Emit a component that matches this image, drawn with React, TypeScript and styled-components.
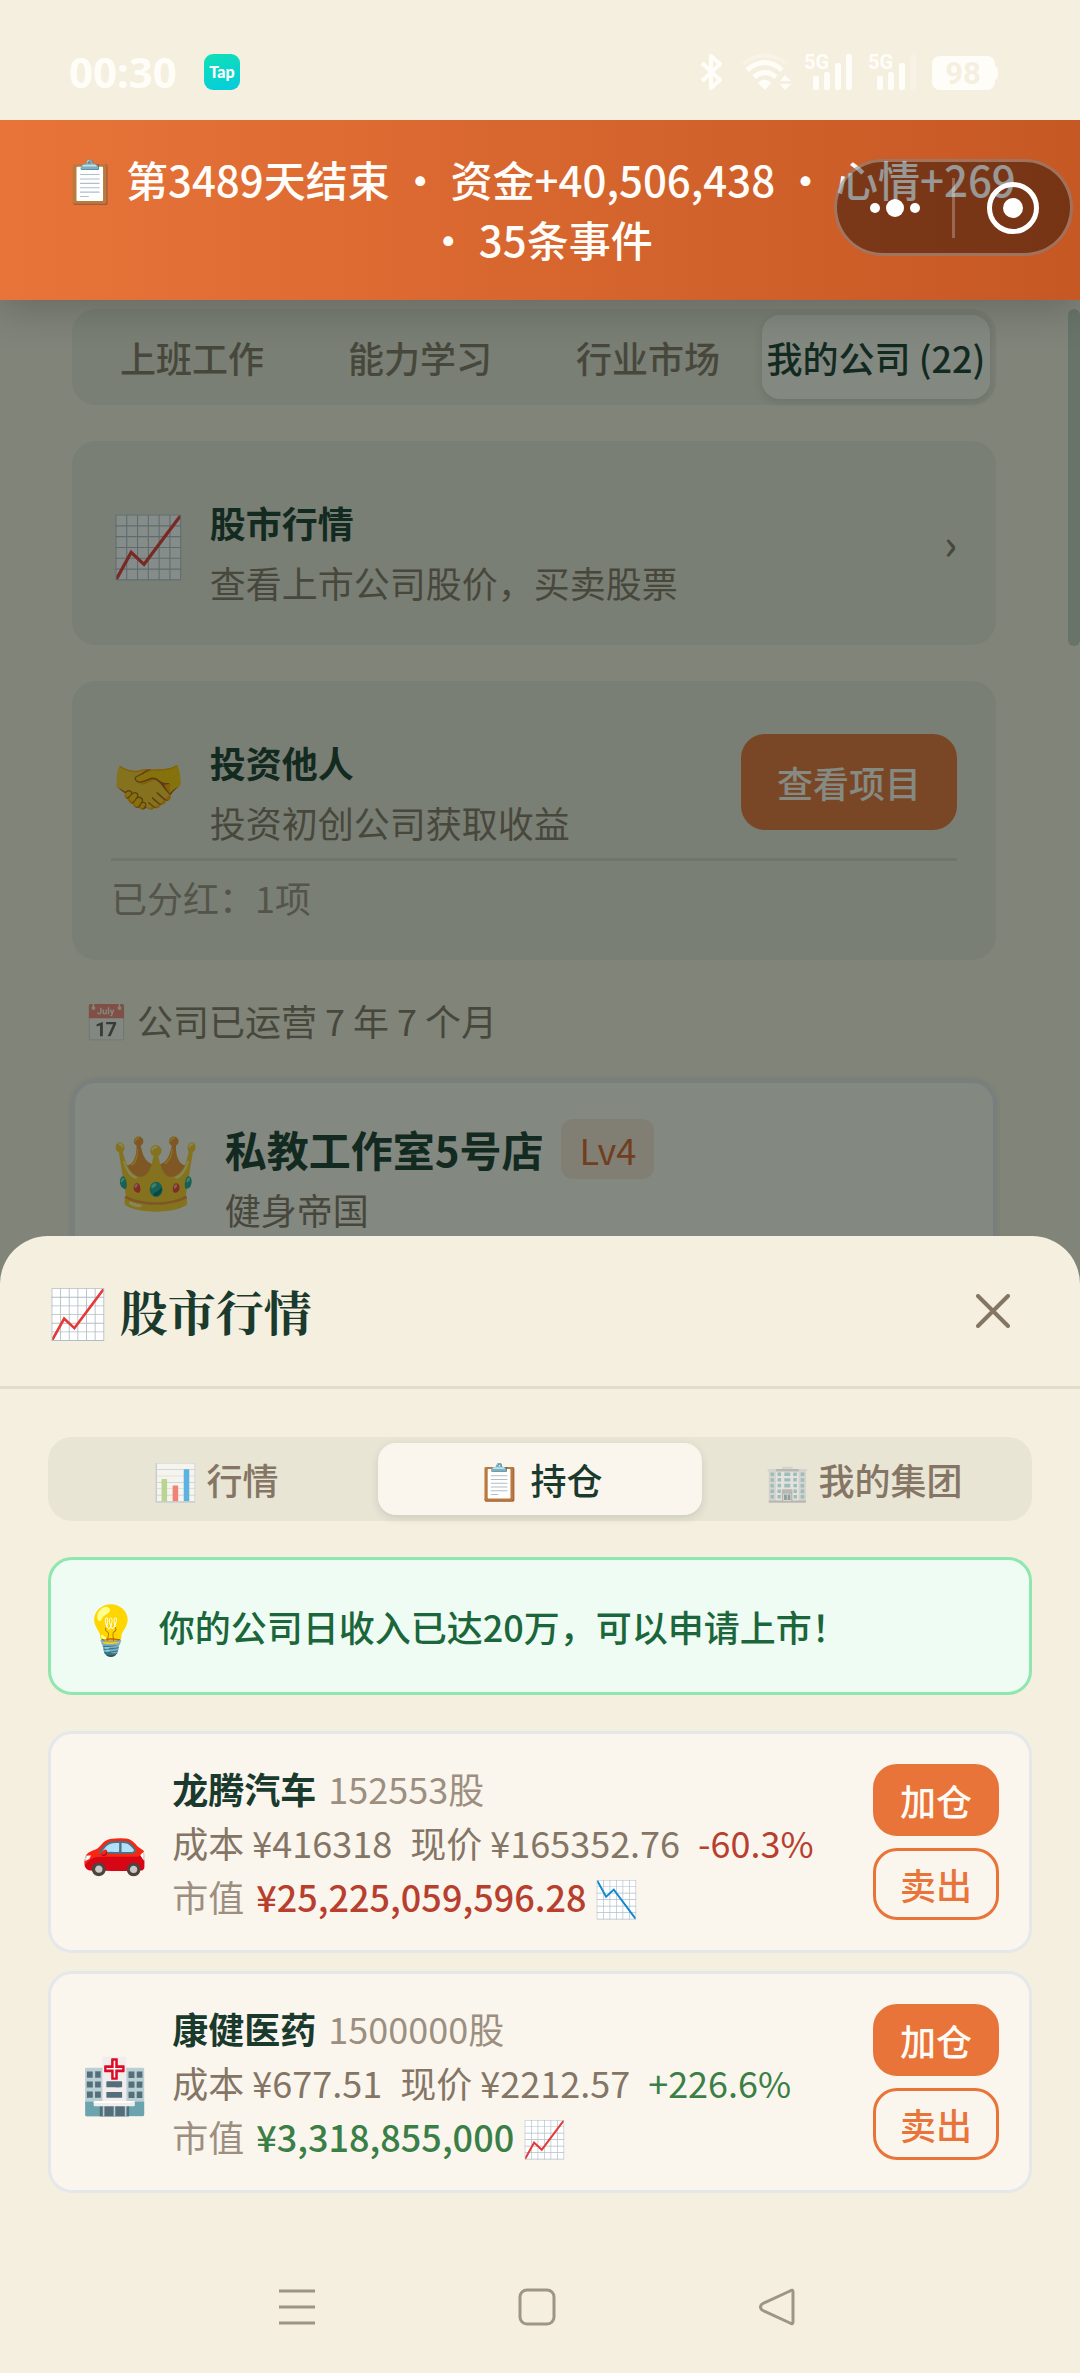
import React from "react";
import styled, { createGlobalStyle, css } from "styled-components";

const c = {
  cream: "#f5efdf",
  paper: "#faf6ee",
  ink: "#1a3a2e",
  brown: "#857565",
  muted: "#9c8f80",
  orange: "#e87439",
  red: "#b83f2e",
  green: "#3a7f45",
  tint: "rgba(26, 58, 46, 0.05)",
  cardTint: "rgba(20, 74, 60, 0.06)",
};

const sans = `"Noto Sans CJK SC", "Noto Color Emoji", sans-serif`;
const serif = `"Noto Serif CJK SC", "Noto Serif SC", "Noto Sans CJK SC", "Noto Color Emoji", serif`;

const GlobalStyle = createGlobalStyle`
  *, *::before, *::after { box-sizing: border-box; }
  body { margin: 0; background: ${c.cream}; }
  button { font: inherit; border: 0; padding: 0; background: none; cursor: pointer; }
  h2, h3, p { margin: 0; font-size: inherit; font-weight: inherit; }
`;

const Screen = styled.div`
  display: flex;
  flex-direction: column;
  height: 100vh;
  overflow: hidden;
  background: ${c.cream};
  color: ${c.ink};
  font-family: ${sans};
  font-size: 36px;
  line-height: 54px;
`;

/* ---------- system bars ---------- */

const StatusBar = styled.header`
  position: relative;
  z-index: 3;
  display: flex;
  align-items: center;
  flex: none;
  height: 120px;
  padding: 24px 80px 0 69px;
  background: ${c.cream};
  color: #fffdf8;
`;

const Clock = styled.time`
  font-family: "Noto Sans", "Open Sans", sans-serif;
  font-size: 42px;
  font-weight: 700;
`;

const TapBadge = styled.span`
  display: grid;
  place-items: center;
  width: 36px;
  height: 36px;
  margin-left: 27px;
  border-radius: 9px;
  background: linear-gradient(160deg, #10e0b4, #04cbe0);
  color: #fff;
  font: 900 16px/36px Lato, sans-serif;
`;

const StatusIcons = styled.svg`
  width: 302px;
  height: 44px;
  margin-left: auto;
  fill: currentColor;
`;

const NavBar = styled.nav`
  display: flex;
  justify-content: center;
  align-items: center;
  gap: 168px;
  flex: none;
  height: 132px;
  padding-right: 6px;
`;

const NavButton = styled.button`
  display: grid;
  place-items: center;
  width: 72px;
  height: 72px;
  svg {
    width: 38px;
    height: 38px;
    fill: none;
    stroke: #9d9688;
    stroke-width: 3;
  }
`;

/* ---------- banner ---------- */

const Banner = styled.div`
  position: relative;
  z-index: 2;
  flex: none;
  padding: 29px 60px 31px;
  background: linear-gradient(90deg, ${c.orange}, #c65824);
  box-shadow: 0 12px 36px rgba(0, 0, 0, 0.18);
  color: #fffdf9;
  font-size: 42px;
  font-weight: 500;
  line-height: 60px;
  text-align: center;
`;

const Capsule = styled.div`
  position: absolute;
  top: 39px;
  right: 7px;
  display: flex;
  align-items: center;
  width: 239px;
  height: 97px;
  border: 3px solid rgba(255, 255, 255, 0.3);
  border-radius: 49px;
  background: rgba(0, 0, 0, 0.4);
`;

const CapsuleButton = styled.button`
  display: grid;
  place-items: center;
  flex: 1;
  height: 100%;
  color: #fff;
  svg {
    width: 56px;
    height: 56px;
    fill: currentColor;
  }
`;

const CapsuleRule = styled.i`
  width: 3px;
  height: 60px;
  background: rgba(255, 255, 255, 0.25);
`;

/* ---------- page behind the sheet ---------- */

const Stage = styled.div`
  position: relative;
  flex: 1;
  min-height: 0;
  overflow: hidden;
`;

const Page = styled.main`
  display: flex;
  flex-direction: column;
  gap: 36px;
  padding: 9px 84px 0 72px;
`;

const ScrollThumb = styled.i`
  position: absolute;
  top: 9px;
  right: 0;
  width: 12px;
  height: 337px;
  border-radius: 6px;
  background: #c4cfc0;
`;

const TabList = styled.div<{ $cols: number }>`
  display: grid;
  grid-template-columns: repeat(${(p) => p.$cols}, 1fr);
  padding: 6px;
  border-radius: 24px;
  background: ${(p) => (p.$cols === 4 ? c.cardTint : c.tint)};
`;

const Tab = styled.button<{ $active?: boolean; $tall?: boolean }>`
  height: ${(p) => (p.$tall ? 84 : 72)}px;
  border-radius: 18px;
  color: ${c.brown};
  font-weight: 500;
  white-space: nowrap;
  ${(p) =>
    p.$active &&
    css`
      background: ${c.paper};
      box-shadow: 0 3px 9px rgba(26, 58, 46, 0.14);
      color: ${c.ink};
    `}
`;

const Faded = styled.span<{ $on?: boolean }>`
  opacity: ${(p) => (p.$on ? 0.6 : 1)};
`;

const Card = styled.section`
  padding: 31px 39px 33px;
  border-radius: 24px;
  background: ${c.cardTint};
`;

const Row = styled.div`
  display: flex;
  align-items: center;
  gap: 24px;
`;

const Emoji = styled.span<{ $size: number }>`
  flex: none;
  font-size: ${(p) => p.$size}px;
  line-height: 84px;
`;

const Crown = styled(Emoji)`
  align-self: flex-start;
  line-height: 96px;
`;

const CardText = styled.div`
  flex: 1;
  padding-top: 20px;
  line-height: 60px;
`;

const Strong = styled.h3`
  font-weight: 700;
`;

const Sub = styled.p`
  color: ${c.brown};
`;

const Chevron = styled.span`
  color: ${c.brown};
  font-size: 42px;
  font-weight: 500;
`;

const ViewButton = styled.button`
  height: 96px;
  padding: 0 36px;
  border-radius: 24px;
  background: ${c.orange};
  color: #fffaf3;
  font-weight: 500;
`;

const CardFoot = styled.p`
  margin-top: 6px;
  padding: 9px 0 3px;
  border-top: 3px solid #ccd3c4;
  color: ${c.muted};
`;

const Running = styled.p`
  padding-left: 12px;
  color: ${c.brown};
  line-height: 48px;
`;

const CompanyCard = styled.section`
  padding: 36px;
  border: 3px solid #e5e7eb;
  border-radius: 24px;
  background: ${c.paper};
  box-shadow: 0 0 6px rgba(80, 80, 120, 0.15);
  line-height: 60px;
`;

const CompanyName = styled.div`
  display: flex;
  gap: 18px;
  font-size: 42px;
`;

const Level = styled.span`
  padding: 0 18px;
  border-radius: 12px;
  background: rgba(232, 116, 57, 0.15);
  color: #d4622c;
  font-size: 36px;
`;

/* ---------- sheet ---------- */

const Overlay = styled.div`
  position: absolute;
  inset: 0;
  display: flex;
  flex-direction: column;
  justify-content: flex-end;
  background: rgba(11, 26, 20, 0.5);
`;

const Sheet = styled.section`
  border-radius: 48px 48px 0 0;
  background: ${c.cream};
`;

const SheetHead = styled.div`
  display: flex;
  justify-content: space-between;
  align-items: center;
  height: 153px;
  padding: 0 48px;
  border-bottom: 3px solid #e2dccb;
`;

const SheetTitle = styled.h2`
  font-family: ${serif};
  font-size: 48px;
  font-weight: 700;
  line-height: 72px;
`;

const CloseButton = styled.button`
  display: grid;
  place-items: center;
  width: 78px;
  height: 78px;
  svg {
    width: 34px;
    height: 34px;
    stroke: ${c.brown};
    stroke-width: 4;
    stroke-linecap: round;
  }
`;

const SheetBody = styled.div`
  display: flex;
  flex-direction: column;
  gap: 36px;
  padding: 48px;
`;

const Tip = styled.div`
  display: flex;
  align-items: center;
  gap: 18px;
  padding: 24px 30px;
  border: 3px solid #8fe6ae;
  border-radius: 24px;
  background: #effcf4;
  color: #1b663a;
  font-weight: 500;
`;

const Holdings = styled.div`
  display: flex;
  flex-direction: column;
  gap: 18px;
`;

const HoldingCard = styled.article`
  display: flex;
  align-items: center;
  gap: 24px;
  padding: 27px 30px;
  border: 3px solid #e5e7eb;
  border-radius: 24px;
  background: ${c.paper};
`;

const HoldingInfo = styled.div`
  flex: 1;
  white-space: nowrap;
`;

const Line = styled.div<{ $wide?: boolean }>`
  display: flex;
  gap: ${(p) => (p.$wide ? 18 : 12)}px;
  color: ${c.brown};
`;

const HoldingName = styled(Strong)`
  color: ${c.ink};
`;

const Muted = styled.span`
  color: ${c.muted};
`;

const Trend = styled.span<{ $up: boolean; $medium?: boolean }>`
  color: ${(p) => (p.$up ? c.green : c.red)};
  font-weight: ${(p) => (p.$medium ? 500 : 400)};
`;

const Actions = styled.div`
  display: flex;
  flex-direction: column;
  gap: 12px;
`;

const TradeButton = styled.button<{ $outline?: boolean }>`
  width: 126px;
  height: 72px;
  border: 3px solid ${c.orange};
  border-radius: 24px;
  background: ${(p) => (p.$outline ? c.paper : c.orange)};
  color: ${(p) => (p.$outline ? c.orange : "#fffaf3")};
  font-weight: 500;
  line-height: 54px;
`;

const pageTabs = ["上班工作", "能力学习", "行业市场", "我的公司 (22)"];

const sheetTabs = [
  { icon: "📊", label: "行情" },
  { icon: "📋", label: "持仓" },
  { icon: "🏢", label: "我的集团" },
];

const holdings = [
  { icon: "🚗", name: "龙腾汽车", shares: "152553股", cost: "416318", price: "165352.76", change: "-60.3%", value: "25,225,059,596.28", up: false },
  { icon: "🏥", name: "康健医药", shares: "1500000股", cost: "677.51", price: "2212.57", change: "+226.6%", value: "3,318,855,000", up: true },
];

function SystemIcons() {
  return (
    <StatusIcons viewBox="0 0 302 44" role="img" aria-label="蓝牙 Wi-Fi 5G 电量 98">
      <path d="M4 13 L22 30 L13 38 V6 L22 14 L4 31" fill="none" stroke="currentColor" strokeWidth="4" strokeLinejoin="round" />
      <path d="M45 14 Q67 -3 89 14" fill="none" stroke="currentColor" strokeWidth="4" opacity=".3" />
      <g fill="none" stroke="currentColor" strokeWidth="5">
        <path d="M49 20 Q67 5 84 20" />
        <path d="M56 27 Q67 18 78 27" />
      </g>
      <path d="M60 33 Q67 26 73 33 L67 40Z" />
      <path d="M82 31 L87 25 L93 31Z M82 34 L87 40 L93 34Z" />
      <g fontFamily="Roboto, sans-serif" fontWeight="700" fontSize="20">
        <text x="106" y="19">5G</text>
        <text x="170" y="19">5G</text>
      </g>
      {[0, 64].map((dx) => (
        <g key={dx}>
          <rect x={115 + dx} y="26" width="6" height="14" rx="2" />
          <rect x={126 + dx} y="22" width="6" height="18" rx="2" />
          <rect x={137 + dx} y="13" width="6" height="27" rx="2" />
          <rect x={148 + dx} y="4" width="6" height="36" rx="2" opacity={dx ? 0.25 : 1} />
        </g>
      ))}
      <rect x="234" y="6" width="63" height="34" rx="8" />
      <path d="M297 16 Q300 17 300 23 Q300 29 297 30Z" />
      <text x="265" y="34" textAnchor="middle" fill={c.cream} fontFamily="Roboto, sans-serif" fontWeight="700" fontSize="31">98</text>
    </StatusIcons>
  );
}

export default function App() {
  return (
    <>
      <GlobalStyle />
      <Screen>
        <StatusBar>
          <Clock>00:30</Clock>
          <TapBadge>Tap</TapBadge>
          <SystemIcons />
        </StatusBar>

        <Banner>
          📋 第3489天结束 • 资金+40,506,438 • 心情+269 • 35条事件
          <Capsule>
            <CapsuleButton aria-label="更多">
              <svg viewBox="0 0 56 56">
                <circle cx="8" cy="28" r="5" />
                <circle cx="28" cy="28" r="9" />
                <circle cx="48" cy="28" r="5" />
              </svg>
            </CapsuleButton>
            <CapsuleRule />
            <CapsuleButton aria-label="关闭小程序">
              <svg viewBox="0 0 56 56">
                <circle cx="28" cy="28" r="23.5" fill="none" stroke="currentColor" strokeWidth="5" />
                <circle cx="28" cy="28" r="10" />
              </svg>
            </CapsuleButton>
          </Capsule>
        </Banner>

        <Stage>
          <Page>
            <TabList $cols={4}>
              {pageTabs.map((label, i) => (
                <Tab key={label} $tall $active={i === 3}>{label}</Tab>
              ))}
            </TabList>

            <Card>
              <Row>
                <Emoji $size={60}>📈</Emoji>
                <CardText>
                  <Strong>股市行情</Strong>
                  <Sub>查看上市公司股价，买卖股票</Sub>
                </CardText>
                <Chevron>›</Chevron>
              </Row>
            </Card>

            <Card>
              <Row>
                <Emoji $size={60}>🤝</Emoji>
                <CardText>
                  <Strong>投资他人</Strong>
                  <Sub>投资初创公司获取收益</Sub>
                </CardText>
                <ViewButton>查看项目</ViewButton>
              </Row>
              <CardFoot>已分红：1项</CardFoot>
            </Card>

            <Running><Faded $on>📅</Faded> 公司已运营 7 年 7 个月</Running>

            <CompanyCard>
              <Row>
                <Crown $size={72}>👑</Crown>
                <div>
                  <CompanyName>
                    <Strong>私教工作室5号店</Strong>
                    <Level>Lv4</Level>
                  </CompanyName>
                  <Sub>健身帝国</Sub>
                </div>
              </Row>
            </CompanyCard>
          </Page>
          <ScrollThumb />

          <Overlay>
            <Sheet role="dialog" aria-label="股市行情">
              <SheetHead>
                <SheetTitle>📈 股市行情</SheetTitle>
                <CloseButton aria-label="关闭">
                  <svg viewBox="0 0 34 34">
                    <path d="M2 2 L32 32 M32 2 L2 32" />
                  </svg>
                </CloseButton>
              </SheetHead>
              <SheetBody>
                <TabList $cols={3}>
                  {sheetTabs.map((t, i) => (
                    <Tab key={t.label} $active={i === 1}>
                      <Faded $on={i !== 1}>{t.icon}</Faded> {t.label}
                    </Tab>
                  ))}
                </TabList>

                <Tip>
                  <Emoji $size={48}>💡</Emoji>
                  <p>你的公司日收入已达20万，可以申请上市！</p>
                </Tip>

                <Holdings>
                  {holdings.map((h) => (
                    <HoldingCard key={h.name}>
                      <Emoji $size={54}>{h.icon}</Emoji>
                      <HoldingInfo>
                        <Line>
                          <HoldingName>{h.name}</HoldingName>
                          <Muted>{h.shares}</Muted>
                        </Line>
                        <Line $wide>
                          <span>成本 ¥{h.cost}</span>
                          <span>现价 ¥{h.price}</span>
                          <Trend $up={h.up}>{h.change}</Trend>
                        </Line>
                        <Line>
                          <Muted>市值</Muted>
                          <Trend $up={h.up} $medium>¥{h.value} {h.up ? "📈" : "📉"}</Trend>
                        </Line>
                      </HoldingInfo>
                      <Actions>
                        <TradeButton>加仓</TradeButton>
                        <TradeButton $outline>卖出</TradeButton>
                      </Actions>
                    </HoldingCard>
                  ))}
                </Holdings>
              </SheetBody>
            </Sheet>
          </Overlay>
        </Stage>

        <NavBar>
          <NavButton aria-label="最近任务">
            <svg viewBox="0 0 38 38"><path d="M1 3 H37 M1 19 H37 M1 35 H37" /></svg>
          </NavButton>
          <NavButton aria-label="主页">
            <svg viewBox="0 0 38 38"><rect x="2" y="2" width="34" height="34" rx="7" /></svg>
          </NavButton>
          <NavButton aria-label="返回">
            <svg viewBox="0 0 38 38"><path d="M35 4 Q35 1 32 3 L4 16 Q1 19 4 22 L32 35 Q35 37 35 34Z" strokeLinejoin="round" /></svg>
          </NavButton>
        </NavBar>
      </Screen>
    </>
  );
}
